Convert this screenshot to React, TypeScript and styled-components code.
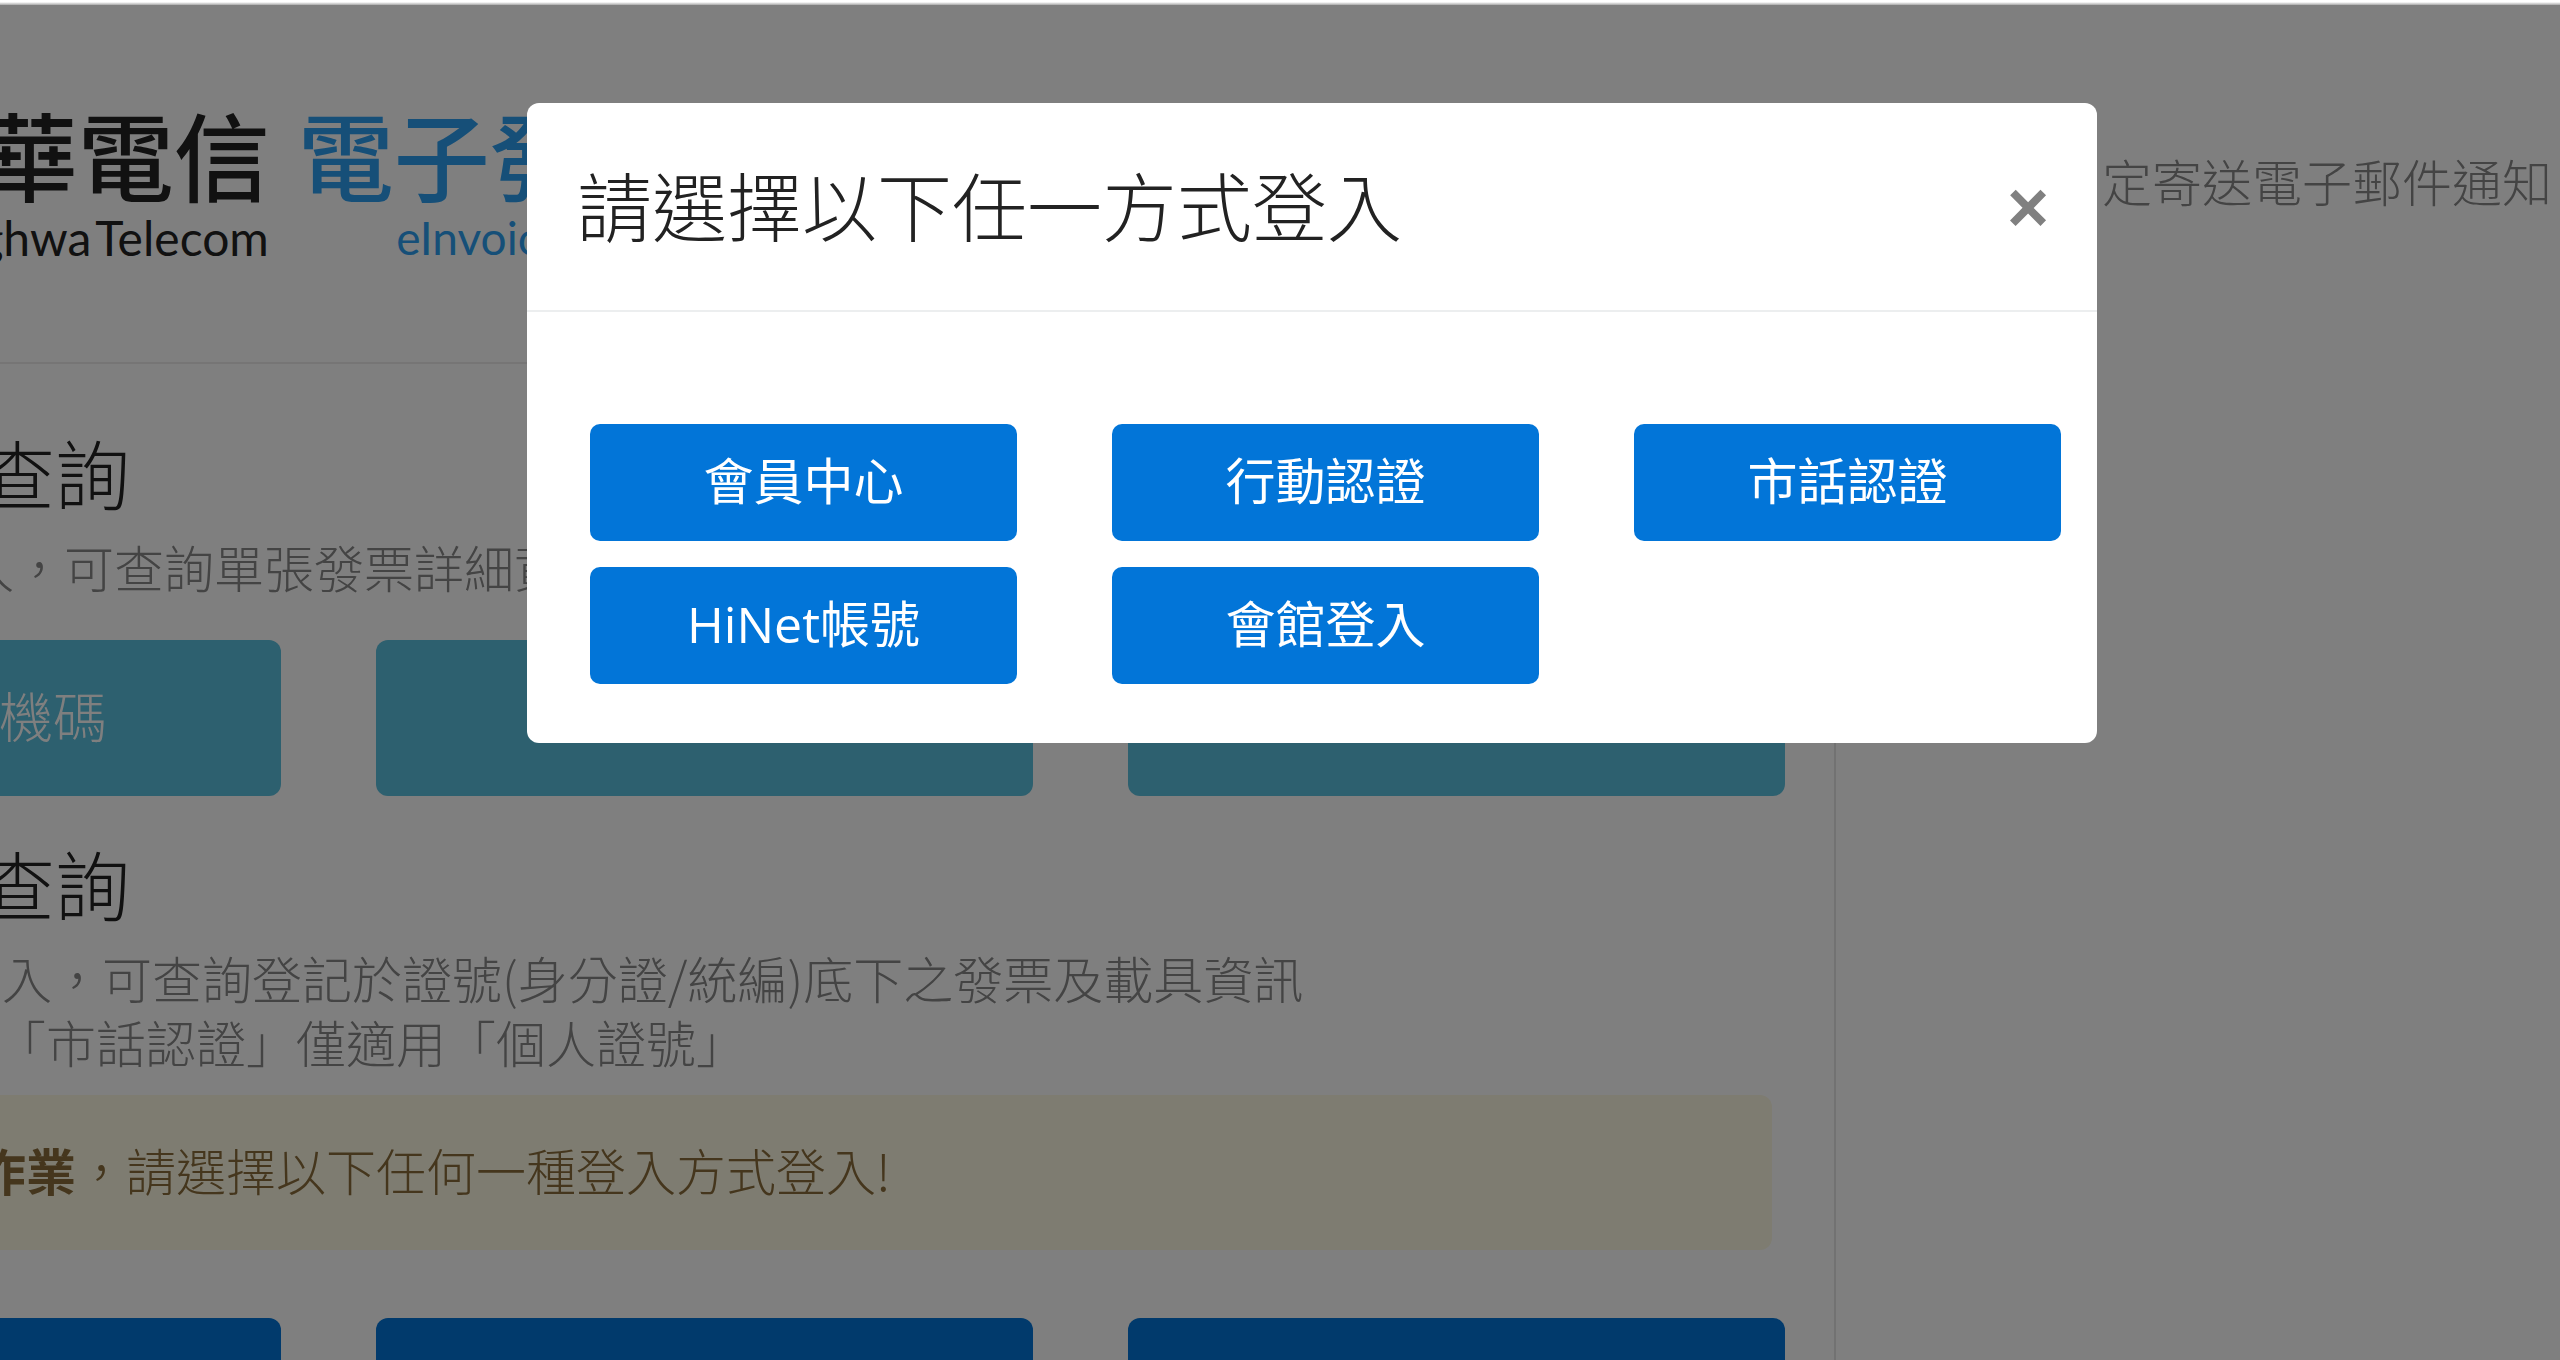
import React from "react";
import styled, { createGlobalStyle } from "styled-components";

const Global = createGlobalStyle`
  html, body { margin: 0; padding: 0; width: 2560px; height: 1360px; overflow: hidden; background: #fff; }
  body { font-family: "Noto Sans CJK TC", "Noto Sans", sans-serif; font-weight: 300; }
  * { box-sizing: border-box; }
`;

const COMMA = "\uFF0C";

const Screen = styled.div`
  position: relative;
  width: 2560px;
  height: 1360px;
  overflow: hidden;
  display: flex;
  flex-direction: column;
`;
const TopEdge = styled.div`
  height: 5px;
  flex: none;
  background: linear-gradient(#ffffff 40%, #a8a8a8);
`;
const Stage = styled.div`
  position: relative;
  flex: 1;
  overflow: hidden;
`;
const Page = styled.div`
  display: flex;
  margin-left: -376px;
  width: 2936px;
`;
const Main = styled.main`
  flex: none;
  width: 2212px;
  min-height: 1355px;
`;
const Header = styled.header`
  height: 359px;
  padding: 100px 0 0 242px;
  border-bottom: 2px solid #eceaea;
  display: flex;
  gap: 28px;
`;
const Content = styled.div`
  height: 996px;
  padding-right: 49px;
  border-right: 2px solid #e4e4e4;
`;
const Aside = styled.aside`
  flex: 1;
  padding: 143px 0 0 66px;
`;
const LogoGroup = styled.div`
  display: flex;
  flex-direction: column;
  align-items: ${(p) => (p.$center ? "center" : "flex-end")};
`;
const LogoName = styled.div`
  font-size: 96px;
  line-height: 96px;
  font-weight: 500;
  white-space: nowrap;
  color: ${(p) => p.$color};
`;
const LogoSub = styled.div`
  margin: 12px ${(p) => p.$shift}px 0 0;
  font-family: Lato, "Noto Sans", sans-serif;
  font-size: ${(p) => p.$size}px;
  line-height: 50px;
  font-weight: 400;
  word-spacing: -7px;
  white-space: nowrap;
  color: ${(p) => p.$color};
`;
const Heading = styled.h2`
  margin: ${(p) => p.$top}px 0 ${(p) => p.$bottom}px;
  padding-left: 56px;
  font-size: 75px;
  line-height: 72px;
  font-weight: 300;
  color: #222;
  white-space: nowrap;
`;
const Lead = styled.p`
  margin: ${(p) => p.$top}px 0 0;
  padding-left: ${(p) => p.$inset}px;
  font-size: 50px;
  line-height: 64px;
  color: #888;
  white-space: nowrap;
`;
const ActionGrid = styled.div`
  margin-top: ${(p) => p.$top}px;
  display: grid;
  grid-template-columns: repeat(3, 657px);
  column-gap: 95px;
`;
const ActionButton = styled.div`
  height: 156px;
  border-radius: 12px;
  background: ${(p) => p.$color};
  color: #fff;
  font-size: 54px;
  display: flex;
  align-items: center;
  justify-content: center;
  white-space: nowrap;
  padding: 0 0 8px ${(p) => p.$pad || 0}px;
`;
const Alert = styled.div`
  margin: 22px 13px 0 0;
  height: 155px;
  border-radius: 12px;
  background: #fcf8e3;
  color: #8a6d3b;
  font-size: 50px;
  display: flex;
  align-items: center;
  padding: 0 0 8px 102px;
  white-space: nowrap;
`;
const AlertStrong = styled.strong`
  font-weight: 700;
`;
const Note = styled.p`
  margin: 0;
  font-size: 50px;
  line-height: 64px;
  color: #888;
  white-space: nowrap;
`;
const Backdrop = styled.div`
  position: absolute;
  inset: 0;
  background: rgba(0, 0, 0, 0.5);
  padding: 98px 0 0 527px;
`;
const Modal = styled.div`
  width: 1570px;
  height: 640px;
  background: #fff;
  border-radius: 12px;
  display: flex;
  flex-direction: column;
`;
const ModalHeader = styled.div`
  height: 209px;
  flex: none;
  padding: 0 48px 0 50px;
  border-bottom: 2px solid #eceeef;
  display: flex;
  align-items: center;
  justify-content: space-between;
`;
const ModalTitle = styled.h3`
  margin: 0 0 6px;
  font-size: 75px;
  line-height: 90px;
  font-weight: 300;
  color: #222;
  white-space: nowrap;
`;
const Close = styled.span`
  font-family: "Liberation Sans", sans-serif;
  font-size: 72px;
  line-height: 72px;
  font-weight: 700;
  color: #808080;
`;
const ModalBody = styled.div`
  padding: 112px 37px 61px 63px;
  display: grid;
  grid-template-columns: repeat(3, 427px);
  grid-auto-rows: 117px;
  column-gap: 95px;
  row-gap: 26px;
`;
const LoginButton = styled.div`
  border-radius: 10px;
  background: #0275d8;
  color: #fff;
  font-family: "Open Sans", "Noto Sans CJK TC", sans-serif;
  font-size: 50px;
  font-weight: 400;
  display: flex;
  align-items: center;
  justify-content: center;
  padding-bottom: 8px;
  white-space: nowrap;
`;

const logins = ["會員中心", "行動認證", "市話認證", "HiNet帳號", "會館登入"];

export default function App() {
  return (
    <Screen>
      <Global />
      <TopEdge />
      <Stage>
        <Page>
          <Main>
            <Header>
              <LogoGroup>
                <LogoName $color="#222">中華電信</LogoName>
                <LogoSub $color="#222" $shift={1} $size={48}>Chunghwa Telecom</LogoSub>
              </LogoGroup>
              <LogoGroup $center>
                <LogoName $color="#2d9ff0">電子發票</LogoName>
                <LogoSub $color="#2d9ff0" $shift={20} $size={46}>eInvoice</LogoSub>
              </LogoGroup>
            </Header>
            <Content>
              <Heading $top={72} $bottom={28}>單張發票查詢</Heading>
              <Lead $top={-2} $inset={40}>{`免登入免免登入${COMMA}可查詢單張發票詳細資料`}</Lead>
              <ActionGrid $top={42}>
                <ActionButton $color="#5bc0de" $pad={10}>發票+隨機碼</ActionButton>
                <ActionButton $color="#5bc0de">發票+捐贈碼</ActionButton>
                <ActionButton $color="#5bc0de">發票+公司統編</ActionButton>
              </ActionGrid>
              <Heading $top={51} $bottom={30}>歸戶發票查詢</Heading>
              <Lead $top={-4} $inset={28}>{`需登入需登入登入${COMMA}可查詢登記於證號(身分證/統編)底下之發票及載具資訊`}</Lead>
              <Lead $top={0} $inset={372}>「市話認證」僅適用「個人證號」</Lead>
              <Alert>
                <AlertStrong>需進行此項作業</AlertStrong>
                {`${COMMA}請選擇以下任何一種登入方式登入!`}
              </Alert>
              <ActionGrid $top={68}>
                <ActionButton $color="#0275d8">會員中心</ActionButton>
                <ActionButton $color="#0275d8">行動認證</ActionButton>
                <ActionButton $color="#0275d8">市話認證</ActionButton>
              </ActionGrid>
            </Content>
          </Main>
          <Aside>
            <Note>會員可自定寄送電子郵件通知</Note>
          </Aside>
        </Page>
        <Backdrop>
          <Modal>
            <ModalHeader>
              <ModalTitle>請選擇以下任一方式登入</ModalTitle>
              <Close>×</Close>
            </ModalHeader>
            <ModalBody>
              {logins.map((label) => (
                <LoginButton key={label}>{label}</LoginButton>
              ))}
            </ModalBody>
          </Modal>
        </Backdrop>
      </Stage>
    </Screen>
  );
}
